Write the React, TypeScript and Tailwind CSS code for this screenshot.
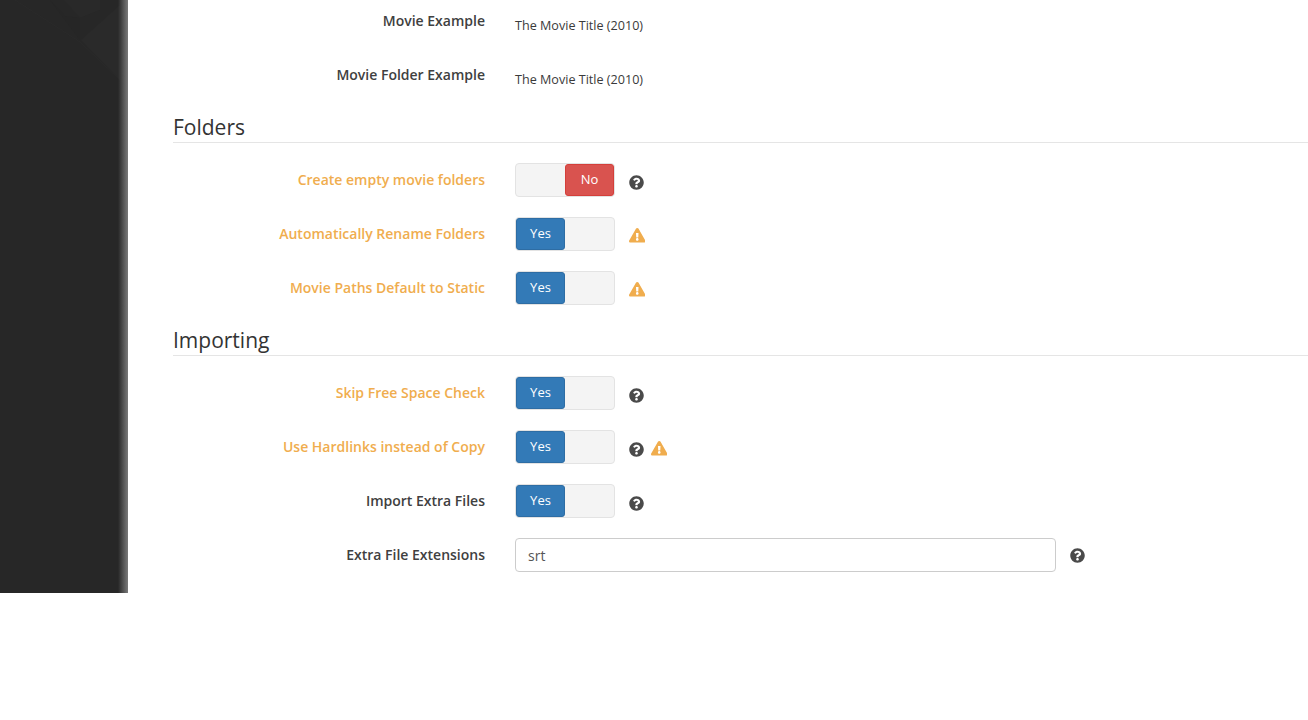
import React from "react";
import { FaQuestionCircle, FaExclamationTriangle } from "react-icons/fa";

const Help = ({ nudge }: { nudge?: boolean }) => (
  <FaQuestionCircle className={`text-[15px] text-[#4a4a4a] ${nudge ? "mt-[2px]" : ""}`} />
);
const Warn = () => <FaExclamationTriangle className="text-[16.5px] text-[#f0ad4e]" />;

function Label({ text, warn }: { text: string; warn?: boolean }) {
  return (
    <label className={`w-[312px] shrink-0 pt-[7px] text-right text-[14px] leading-[20px] font-semibold ${warn ? "text-[#f0ad4e]" : "text-[#404040]"}`}>
      {text}
    </label>
  );
}

function Toggle({ on }: { on: boolean }) {
  return (
    <div className="flex h-[34px] w-[100px] rounded-[4px] border border-[#e3e3e3] bg-[#f4f4f4]">
      {on ? (
        <div className="flex h-[32px] w-[49px] items-center justify-center rounded-[3px] border border-[#2e6da4] bg-[#337ab7] pb-[1px] text-[13px] text-white">Yes</div>
      ) : (
        <div className="ml-auto flex h-[32px] w-[49px] items-center justify-center rounded-[3px] border border-[#d43f3a] bg-[#d9534f] pb-[1px] text-[13px] text-white">No</div>
      )}
    </div>
  );
}

function Row({ label, warn, on, icons }: { label: string; warn?: boolean; on: boolean; icons: React.ReactNode }) {
  return (
    <div className="mb-5 flex h-[34px]">
      <Label text={label} warn={warn} />
      <div className="ml-[30px] flex">
        <Toggle on={on} />
        <div className="ml-[13.5px] flex items-center gap-[7px] pt-[3px]">{icons}</div>
      </div>
    </div>
  );
}

function TextRow({ label, value }: { label: string; value: string }) {
  return (
    <div className="mb-5 flex h-[34px]">
      <Label text={label} />
      <div className="ml-[30px] pt-[13px] text-[12.6px] leading-[18px] text-[#3a3a3a]">{value}</div>
    </div>
  );
}

function Legend({ children }: { children: string }) {
  return (
    <div className="mb-5 h-[31px] border-b border-[#e5e5e5] text-[21px] leading-[30px] text-[#333]">{children}</div>
  );
}

export default function App() {
  return (
    <div className="flex h-[720px] w-[1308px] overflow-hidden bg-white font-['Open_Sans',sans-serif]">
      <aside className="relative h-[593px] w-[128px] shrink-0 overflow-hidden bg-[#272727]">
        <svg className="absolute left-0 top-0" width="128" height="90" fill="none">
          <path d="M81 40 L120 5 L120 80 Z" fill="#2a2a2a" />
          <path d="M50 0 L65 16 L80 18 L80 40 Z" fill="#262626" />
          <path d="M64 0 L80 18 L100 10 L100 0 Z" fill="#292929" />
          <path d="M15 0 L80 42 L120 80" stroke="#2a2a2a" strokeWidth="1" />
        </svg>
        <div className="absolute right-0 top-0 h-full w-[10px] bg-gradient-to-r from-transparent to-[#7a7a7a]" />
      </aside>
      <main className="min-w-0 flex-1 pl-[45px] pt-[4px]">
        <TextRow label="Movie Example" value="The Movie Title (2010)" />
        <TextRow label="Movie Folder Example" value="The Movie Title (2010)" />
        <Legend>Folders</Legend>
        <Row label="Create empty movie folders" warn on={false} icons={<Help nudge />} />
        <Row label="Automatically Rename Folders" warn on icons={<Warn />} />
        <Row label="Movie Paths Default to Static" warn on icons={<Warn />} />
        <Legend>Importing</Legend>
        <Row label="Skip Free Space Check" warn on icons={<Help nudge />} />
        <Row label="Use Hardlinks instead of Copy" warn on icons={<><Help nudge /><Warn /></>} />
        <Row label="Import Extra Files" on icons={<Help nudge />} />
        <div className="mb-5 flex h-[34px]">
          <Label text="Extra File Extensions" />
          <div className="ml-[30px] flex items-center">
            <input
              readOnly
              value="srt"
              className="h-[34px] w-[541px] rounded-[4px] border border-[#ccc] bg-white px-3 text-[14px] text-[#555] outline-none"
            />
            <div className="ml-[14px] flex items-center"><Help /></div>
          </div>
        </div>
      </main>
    </div>
  );
}
